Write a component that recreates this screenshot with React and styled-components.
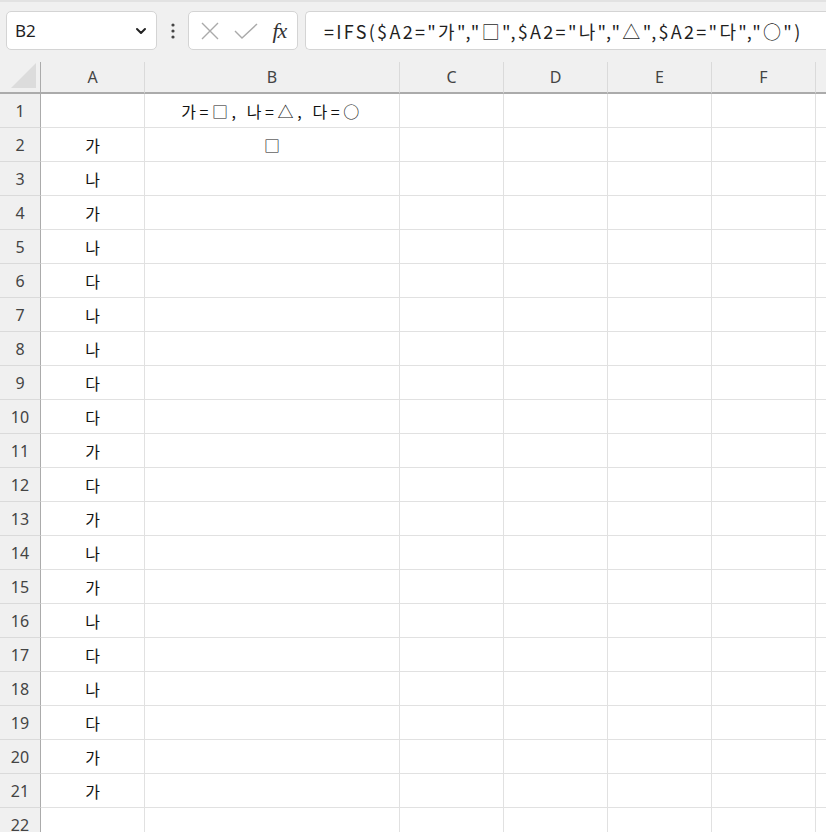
import React from 'react'
import styled, { createGlobalStyle } from 'styled-components'

const GlobalStyle = createGlobalStyle`
  html, body {
    margin: 0;
    padding: 0;
    background: #f0f0f0;
    overflow: hidden;
  }
  body {
    font-family: "Noto Sans", "Noto Sans CJK KR", sans-serif;
  }
`

const Page = styled.div`
  width: 826px;
  height: 832px;
  overflow: hidden;
  background: #f0f0f0;
`

const Toolbar = styled.div`
  display: flex;
  align-items: center;
  height: 62px;
  padding: 0 0 3px 6px;
  box-sizing: border-box;
  border-top: 2px solid #e2e2e2;
`

const NameBox = styled.div`
  display: flex;
  align-items: center;
  justify-content: space-between;
  width: 151px;
  height: 39px;
  box-sizing: border-box;
  padding: 0 8px;
  background: #fff;
  border: 1px solid #d4d4d4;
  border-radius: 5px;
  font-size: 17px;
  color: #1f1f1f;
`

const Dots = styled.div`
  width: 31px;
  display: flex;
  justify-content: center;
`

const FormulaButtons = styled.div`
  display: flex;
  align-items: center;
  justify-content: space-around;
  width: 110px;
  height: 39px;
  box-sizing: border-box;
  padding: 0 4px;
  background: #fff;
  border: 1px solid #d4d4d4;
  border-radius: 5px;
`

const Fx = styled.span`
  font-family: "Liberation Serif", "DejaVu Serif", serif;
  font-style: italic;
  font-size: 22px;
  color: #333;
  letter-spacing: -1px;
`

const FormulaBox = styled.div`
  flex: 1;
  margin-left: 7px;
  height: 39px;
  box-sizing: border-box;
  display: flex;
  align-items: center;
  padding-left: 18px;
  background: #fff;
  border: 1px solid #d4d4d4;
  border-right: none;
  border-radius: 5px 0 0 5px;
  font-family: "Noto Sans CJK KR", "Noto Sans", sans-serif;
  font-size: 18px;
  letter-spacing: 2.3px;
  color: #1f1f1f;
  white-space: nowrap;
`

const Sheet = styled.div`
  display: grid;
  grid-template-columns: 41px 104px 255px 104px 104px 104px 104px 104px;
  grid-template-rows: 32px;
  grid-auto-rows: 34px;
`

const Corner = styled.div`
  position: relative;
  background: #f0f0f0;
  border-right: 1px solid #ababab;
  border-bottom: 2px solid #ababab;
  box-sizing: border-box;
`

const Triangle = styled.div`
  position: absolute;
  right: 4px;
  bottom: 4px;
  width: 0;
  height: 0;
  border-left: 25px solid transparent;
  border-bottom: 25px solid #dcdcdc;
`

const ColHead = styled.div`
  display: flex;
  align-items: center;
  justify-content: center;
  background: #f0f0f0;
  border-right: 1px solid #dadada;
  border-bottom: 2px solid #ababab;
  box-sizing: border-box;
  font-size: 16px;
  color: #444;
`

const RowHead = styled.div`
  display: flex;
  align-items: center;
  justify-content: center;
  background: #f0f0f0;
  border-right: 1px solid #ababab;
  border-bottom: 1px solid #dadada;
  box-sizing: border-box;
  font-size: 16px;
  color: #444;
`

const Cell = styled.div`
  display: flex;
  align-items: center;
  justify-content: center;
  background: #fff;
  border-right: 1px solid #e1e1e1;
  border-bottom: 1px solid #e1e1e1;
  box-sizing: border-box;
  font-family: "Noto Sans CJK KR", "Noto Sans", sans-serif;
  font-size: 16px;
  letter-spacing: ${p => p.$wide ? '3.6px' : '0'};
  color: #111;
  white-space: nowrap;
`

const columns = ['A', 'B', 'C', 'D', 'E', 'F', 'G']
const colA = ['가', '나', '가', '나', '다', '나', '나', '다', '다', '가', '다', '가', '나', '가', '나', '다', '나', '다', '가', '가']

const rows = []
for (let r = 1; r <= 22; r++) {
  let a = ''
  let b = ''
  if (r === 1) b = '가=□, 나=△, 다=○'
  if (r >= 2 && r <= 21) a = colA[r - 2]
  if (r === 2) b = '□'
  rows.push({ n: r, a, b })
}

export default function App() {
  return (
    <Page>
      <GlobalStyle />
      <Toolbar>
        <NameBox>
          <span>B2</span>
          <svg width="14" height="14" viewBox="0 0 14 14">
            <path d="M3 5 L7 9 L11 5" fill="none" stroke="#222" strokeWidth="2" strokeLinecap="round" strokeLinejoin="round" />
          </svg>
        </NameBox>
        <Dots>
          <svg width="4" height="16" viewBox="0 0 4 16">
            <circle cx="2" cy="2" r="1.6" fill="#444" />
            <circle cx="2" cy="8" r="1.6" fill="#444" />
            <circle cx="2" cy="14" r="1.6" fill="#444" />
          </svg>
        </Dots>
        <FormulaButtons>
          <svg width="20" height="20" viewBox="0 0 20 20">
            <path d="M2 2 L18 18 M18 2 L2 18" stroke="#aaa" strokeWidth="1.4" />
          </svg>
          <svg width="26" height="20" viewBox="0 0 26 20">
            <path d="M2 10 L9 17 L24 3" fill="none" stroke="#aaa" strokeWidth="1.4" />
          </svg>
          <Fx>fx</Fx>
        </FormulaButtons>
        <FormulaBox>=IFS($A2="가","□",$A2="나","△",$A2="다","○")</FormulaBox>
      </Toolbar>
      <Sheet>
        <Corner><Triangle /></Corner>
        {columns.map(c => <ColHead key={c}>{c === 'G' ? '' : c}</ColHead>)}
        {rows.map(row => (
          <React.Fragment key={row.n}>
            <RowHead>{row.n}</RowHead>
            <Cell>{row.a}</Cell>
            <Cell $wide={row.n === 1}>{row.b}</Cell>
            <Cell />
            <Cell />
            <Cell />
            <Cell />
            <Cell />
          </React.Fragment>
        ))}
      </Sheet>
    </Page>
  )
}
